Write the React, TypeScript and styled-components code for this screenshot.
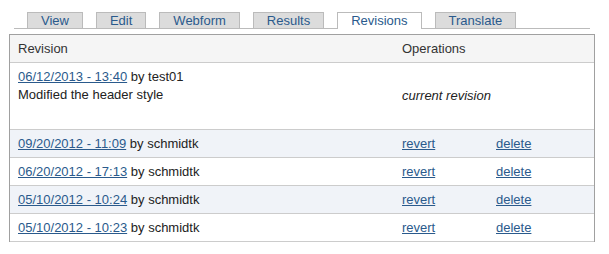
import React from "react";
import styled, { createGlobalStyle } from "styled-components";

const Global = createGlobalStyle`
  html, body { margin: 0; padding: 0; background: #fff; }
  body { font-family: "Liberation Sans", Arial, sans-serif; font-size: 13px; color: #222; }
`;

const Page = styled.div`
  padding: 12px 0 0 9px;
`;

const TabBar = styled.ul`
  display: flex;
  align-items: flex-end;
  gap: 13px;
  list-style: none;
  margin: 0 0 0 5px;
  padding: 0 0 0 13px;
  width: 563px;
  border-bottom: 1px solid #bbb;
`;

const Tab = styled.li<{ $active?: boolean }>`
  height: ${(p) => (p.$active ? "16px" : "15px")};
  margin-bottom: ${(p) => (p.$active ? "-1px" : "0")};
  border: 1px solid #bbb;
  border-bottom: none;
  background: ${(p) => (p.$active ? "#fff" : "#dcdcdc")};
  padding: 0 13px;
  line-height: 15px;
  font-size: 13px;
  color: #2a5a8c;
  white-space: nowrap;
`;

const Table = styled.table`
  margin-top: 5px;
  width: 586px;
  table-layout: fixed;
  border-collapse: separate;
  border-spacing: 0;
  border: 1px solid #a0a0a0;
  border-bottom: none;
`;

const HeadCell = styled.th`
  height: 27px;
  padding: 0 8px;
  background: #f5f5f5;
  border-bottom: 1px solid #ccc;
  text-align: left;
  font-weight: normal;
  color: #333;
  vertical-align: middle;
`;

const Row = styled.tr<{ $even?: boolean }>`
  background: ${(p) => (p.$even ? "#f0f3f8" : "#fff")};
`;

const Cell = styled.td`
  height: 27px;
  padding: 0 8px;
  border-bottom: 1px solid #ccc;
  vertical-align: middle;
  line-height: 18px;
  white-space: nowrap;
`;

const TopCell = styled(Cell)`
  padding: 5px 8px 25px;
  vertical-align: top;
`;

const Current = styled.em`
  font-style: italic;
`;

const Link = styled.a`
  color: #2a5a8c;
  text-decoration: underline;
`;

const LogLine = styled.div`
  line-height: 18px;
`;

const tabs = ["View", "Edit", "Webform", "Results", "Revisions", "Translate"];

const revisions = [
  { date: "09/20/2012 - 11:09", by: "schmidtk" },
  { date: "06/20/2012 - 17:13", by: "schmidtk" },
  { date: "05/10/2012 - 10:24", by: "schmidtk" },
  { date: "05/10/2012 - 10:23", by: "schmidtk" },
];

export default function App() {
  return (
    <>
      <Global />
      <Page>
        <TabBar>
          {tabs.map((t) => (
            <Tab key={t} $active={t === "Revisions"}>
              {t}
            </Tab>
          ))}
        </TabBar>
        <Table>
          <colgroup>
            <col style={{ width: 384 }} />
            <col style={{ width: 94 }} />
            <col />
          </colgroup>
          <thead>
            <tr>
              <HeadCell>Revision</HeadCell>
              <HeadCell colSpan={2}>Operations</HeadCell>
            </tr>
          </thead>
          <tbody>
            <Row>
              <TopCell>
                <LogLine>
                  <Link href="#">06/12/2013 - 13:40</Link> by test01
                </LogLine>
                <LogLine>Modified the header style</LogLine>
              </TopCell>
              <Cell colSpan={2}>
                <Current>current revision</Current>
              </Cell>
            </Row>
            {revisions.map((r, i) => (
              <Row key={i} $even={i % 2 === 0}>
                <Cell>
                  <Link href="#">{r.date}</Link> by {r.by}
                </Cell>
                <Cell>
                  <Link href="#">revert</Link>
                </Cell>
                <Cell>
                  <Link href="#">delete</Link>
                </Cell>
              </Row>
            ))}
          </tbody>
        </Table>
      </Page>
    </>
  );
}
